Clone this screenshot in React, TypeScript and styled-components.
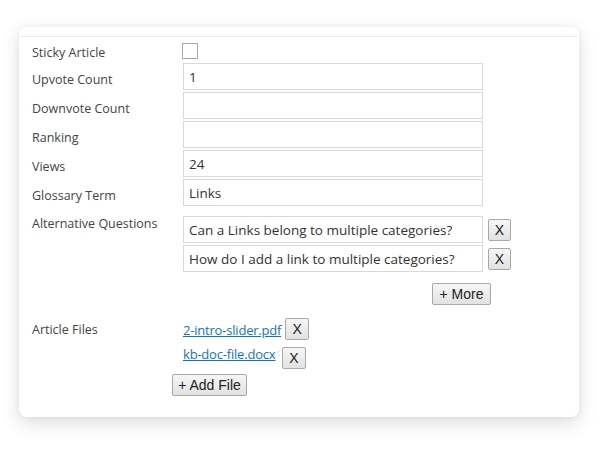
import styled, { createGlobalStyle } from 'styled-components';

const GlobalStyle = createGlobalStyle`
  html, body {
    margin: 0;
    padding: 0;
    background: #fff;
    font-family: "Open Sans", "Liberation Sans", sans-serif;
    color: #3a3a3a;
  }
`;

const alternativeQuestions = [
  'Can a Links belong to multiple categories?',
  'How do I add a link to multiple categories?',
];

const articleFiles = ['2-intro-slider.pdf', 'kb-doc-file.docx'];

function App() {
  return (
    <Page>
      <GlobalStyle />
      <Card>
        <CardTop />
        <Form>
          <FieldRow>
            <Label $pad={7}>Sticky Article</Label>
            <CheckboxCell>
              <Checkbox type="checkbox" />
            </CheckboxCell>
          </FieldRow>
          <FieldRow>
            <Label $pad={8}>Upvote Count</Label>
            <TextInput defaultValue="1" />
          </FieldRow>
          <FieldRow>
            <Label $pad={8}>Downvote Count</Label>
            <TextInput defaultValue="" />
          </FieldRow>
          <FieldRow>
            <Label $pad={8}>Ranking</Label>
            <TextInput defaultValue="" />
          </FieldRow>
          <FieldRow>
            <Label $pad={8}>Views</Label>
            <TextInput defaultValue="24" />
          </FieldRow>
          <FieldRow $gap={10}>
            <Label $pad={8}>Glossary Term</Label>
            <TextInput defaultValue="Links" />
          </FieldRow>
          <FieldRow $gap={13}>
            <Label $pad={-1}>Alternative Questions</Label>
            <Stack>
              {alternativeQuestions.map((q) => (
                <QuestionRow key={q}>
                  <TextInput defaultValue={q} />
                  <SmallButton>X</SmallButton>
                </QuestionRow>
              ))}
              <MoreButton>+ More</MoreButton>
            </Stack>
          </FieldRow>
          <FieldRow>
            <Label $pad={3}>Article Files</Label>
            <Stack>
              {articleFiles.map((f, i) => (
                <FileRow key={f} $second={i === 1}>
                  <FileLink href="#">{f}</FileLink>
                  {i === 1 ? <Dots>:</Dots> : null}
                  <FileButton $second={i === 1}>X</FileButton>
                </FileRow>
              ))}
              <AddFileButton>+ Add File</AddFileButton>
            </Stack>
          </FieldRow>
        </Form>
      </Card>
    </Page>
  );
}

export default App;

const Page = styled.div`
  padding: 27px 21px 33px 19px;
`;

const Card = styled.div`
  width: 560px;
  height: 390px;
  box-sizing: border-box;
  background: #fff;
  border-radius: 8px;
  box-shadow: 0 6px 18px rgba(50, 50, 80, 0.16), 0 0 6px rgba(50, 50, 80, 0.05);
  overflow: hidden;
`;

const CardTop = styled.div`
  height: 9px;
  border-bottom: 1px solid #ebebeb;
  margin: 0 1px;
`;

const Form = styled.div`
  padding: 0 13px;
`;

const FieldRow = styled.div<{ $gap?: number }>`
  display: grid;
  grid-template-columns: 151px 300px;
  align-items: start;
  margin-bottom: ${(p) => p.$gap ?? 2}px;
`;

const Label = styled.div<{ $pad: number }>`
  font-size: 12.5px;
  line-height: 17px;
  color: #444;
  margin-top: ${(p) => p.$pad}px;
`;

const CheckboxCell = styled.div`
  height: 24px;
  padding-top: 6px;
  box-sizing: border-box;
`;

const Checkbox = styled.input`
  appearance: none;
  display: block;
  margin: 0 0 0 -1px;
  width: 16px;
  height: 16px;
  border: 1px solid #a9a9a9;
  background: #fff;
  box-sizing: border-box;
`;

const TextInput = styled.input`
  width: 300px;
  height: 27px;
  box-sizing: border-box;
  border: 1px solid #dadada;
  padding: 0 5px;
  font-family: "Open Sans", "Liberation Sans", sans-serif;
  font-size: 13.5px;
  color: #333;
  background: #fff;
  outline: none;
`;

const Stack = styled.div`
  display: flex;
  flex-direction: column;
  align-items: flex-start;
`;

const QuestionRow = styled.div`
  display: flex;
  align-items: center;
  gap: 5px;
  margin-bottom: 2px;
`;

const ButtonBase = styled.button`
  font-family: "Liberation Sans", "Open Sans", sans-serif;
  font-size: 14px;
  color: #222;
  background: linear-gradient(#f6f6f6, #e2e2e2);
  border: 1px solid #a8a8a8;
  border-radius: 2px;
  padding: 0;
  box-sizing: border-box;
  cursor: pointer;
  line-height: 1;
`;

const SmallButton = styled(ButtonBase)`
  width: 23px;
  height: 22px;
`;

const MoreButton = styled(ButtonBase)`
  width: 59px;
  height: 22px;
  margin: 9px 0 0 249px;
`;

const FileRow = styled.div<{ $second?: boolean }>`
  display: flex;
  align-items: flex-start;
  height: ${(p) => (p.$second ? 32 : 24)}px;
`;

const FileLink = styled.a`
  font-size: 13px;
  letter-spacing: -0.2px;
  color: #1575b8;
  text-decoration: underline;
  line-height: 22px;
  padding-top: 1px;
`;

const Dots = styled.span`
  font-size: 9px;
  color: #b5b5b5;
  line-height: 22px;
  margin-left: 2px;
`;

const FileButton = styled(SmallButton)<{ $second?: boolean }>`
  width: 24px;
  margin-left: ${(p) => (p.$second ? 2 : 4)}px;
  margin-top: ${(p) => (p.$second ? 5 : 0)}px;
`;

const AddFileButton = styled(ButtonBase)`
  width: 75px;
  height: 22px;
  margin: 0 0 0 -11px;
`;
